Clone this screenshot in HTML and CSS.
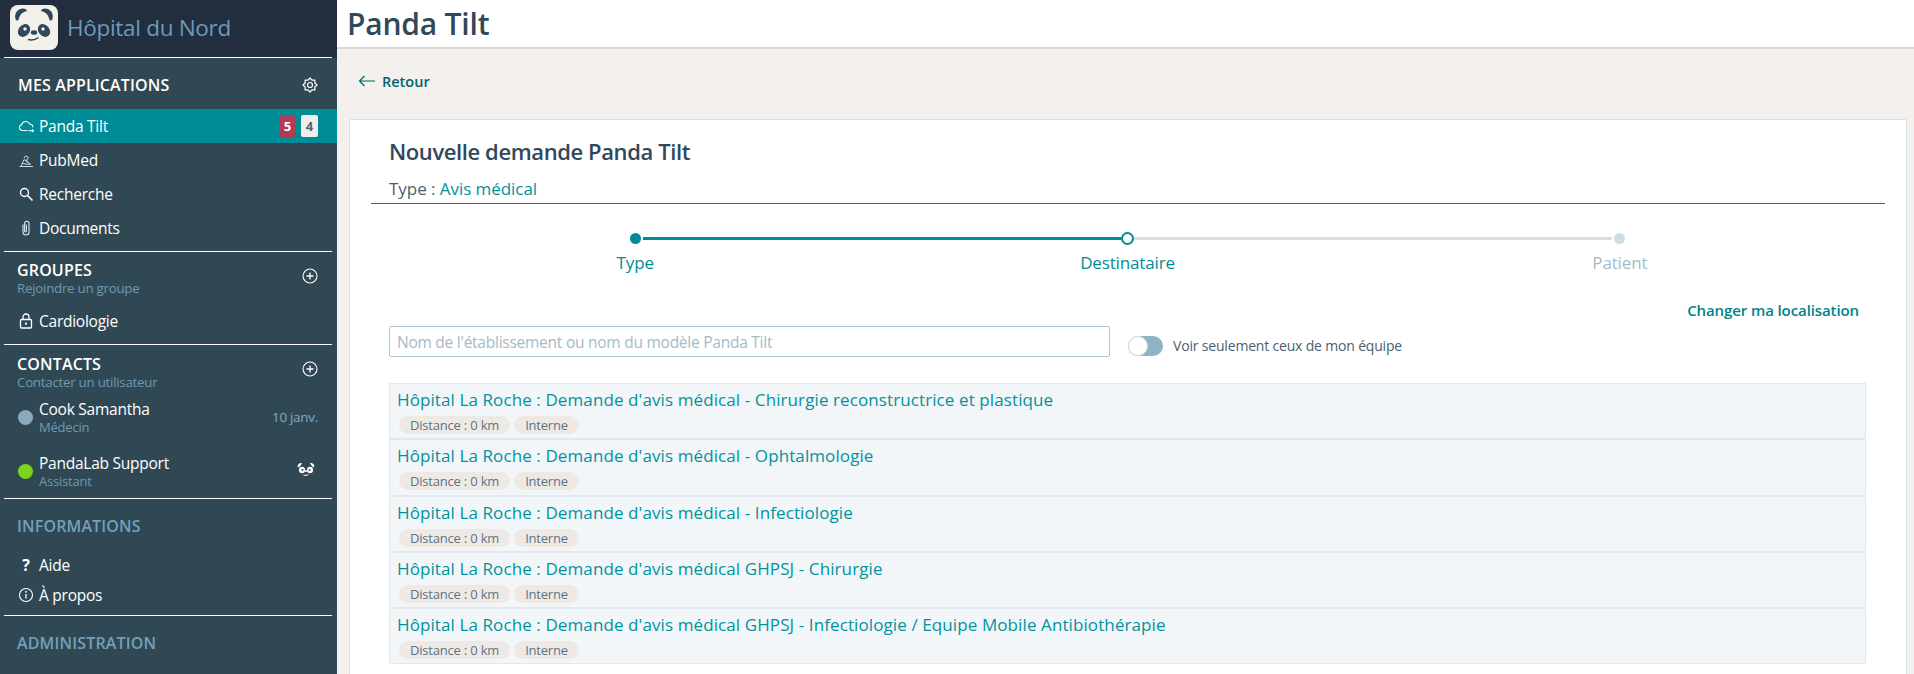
FILE: index.html
```html
<!DOCTYPE html>
<html lang="fr">
<head>
<meta charset="utf-8">
<title>Panda Tilt</title>
<link rel="stylesheet" href="styles.css">
</head>
<body>
<aside class="sidebar">
  <header class="brand">
    <svg class="logo" viewBox="0 0 48 45"><rect width="48" height="45" rx="8" fill="#f2f0eb"/><path d="M5.500 14C4 8 8 3.500 13 3.500 15 3.500 17 4.500 17 6 12 7 9.500 10 8.500 15 7.500 16 6 15.500 5.500 14Z" fill="#30485a"/><path d="M42.500 14C44 8 40 3.500 35 3.500 33 3.500 31 4.500 31 6 36 7 38.500 10 39.500 15 40.500 16 42 15.500 42.500 14Z" fill="#30485a"/><ellipse cx="14" cy="25.500" rx="5.500" ry="7" transform="rotate(40 14 25.500)" fill="#30485a"/><ellipse cx="34" cy="25.500" rx="5.500" ry="7" transform="rotate(-40 34 25.500)" fill="#30485a"/><circle cx="15" cy="24" r="1.700" fill="#f2f0eb"/><circle cx="33" cy="24" r="1.700" fill="#f2f0eb"/><ellipse cx="24" cy="27.500" rx="3.200" ry="2.300" fill="#30485a"/><path d="M18 34.500Q24 36 28.500 32.500" fill="none" stroke="#30485a" stroke-width="1.500"/></svg>
    <span class="brand-name">Hôpital du Nord</span>
  </header>

  <section class="block block-apps">
    <div class="block-head head-apps">
      <h2 class="block-title">MES APPLICATIONS</h2>
      <svg class="ico-r" viewBox="0 0 16 16"><path d="M15 8L12.800 10 12.950 12.950 10 12.800 8 15 6 12.800 3.050 12.950 3.200 10 1 8 3.200 6 3.050 3.050 6 3.200 8 1 10 3.200 12.950 3.050 12.800 6Z" fill="none" stroke="#fff" stroke-width="1.200" stroke-linejoin="round"/><circle cx="8" cy="8" r="2.500" fill="none" stroke="#fff" stroke-width="1.200"/></svg>
    </div>
    <a class="nav-row active">
      <svg class="ico" viewBox="0 0 16 16"><path d="M9.500 12.500H4.200A3 3 0 0 1 3.700 6.600 4.200 4.200 0 0 1 11.600 6 3.300 3.300 0 0 1 14.800 9.300M10.500 12.800H15.500M14 11.500l1.500 1.300-1.500 1.200" fill="none" stroke="#fff" stroke-width="1.100"/></svg>
      <span class="nav-label">Panda Tilt</span>
      <span class="badge badge-red">5</span><span class="badge badge-light">4</span>
    </a>
    <a class="nav-row">
      <svg class="ico" viewBox="0 0 16 16"><path d="M1.500 14.500H15M3 14.500l3-7 7 5M4.500 11.500l7 1M6.500 6a1.800 1.800 0 1 1 2.300 1.600M8 7.500l2.500 3.500" fill="none" stroke="#cfdbe2" stroke-width="1"/></svg>
      <span class="nav-label">PubMed</span>
    </a>
    <a class="nav-row">
      <svg class="ico" viewBox="0 0 16 16"><circle cx="6.500" cy="6.500" r="4" fill="none" stroke="#fff" stroke-width="1.400"/><path d="M9.500 9.500l5 5" stroke="#fff" stroke-width="1.600"/></svg>
      <span class="nav-label">Recherche</span>
    </a>
    <a class="nav-row">
      <svg class="ico" viewBox="0 0 16 16"><path d="M5 4.500v7.500a3 3 0 0 0 6 0V3.500a2.200 2.200 0 0 0-4.400 0V11a.9.900 0 0 0 1.800 0V4.500" fill="none" stroke="#dfe7ec" stroke-width="1.100"/></svg>
      <span class="nav-label">Documents</span>
    </a>
  </section>

  <section class="block block-groups">
    <div class="block-head head-sub">
      <div><h2 class="block-title">GROUPES</h2><p class="block-sub">Rejoindre un groupe</p></div>
      <svg class="ico-r ico-plus" viewBox="0 0 16 16"><circle cx="8" cy="8" r="7" fill="none" stroke="#fff" stroke-width="1.100"/><path d="M8 4.500v7M4.500 8h7" stroke="#fff" stroke-width="1.300"/></svg>
    </div>
    <a class="nav-row">
      <svg class="ico" viewBox="0 0 16 16"><rect x="2.500" y="6.500" width="11" height="8.500" rx="1" fill="none" stroke="#fff" stroke-width="1.300"/><path d="M5 6.500V4a3 3 0 0 1 6 0v2.500" fill="none" stroke="#fff" stroke-width="1.300"/><circle cx="8" cy="10.700" r="1.100" fill="#fff"/></svg>
      <span class="nav-label">Cardiologie</span>
    </a>
  </section>

  <section class="block block-contacts">
    <div class="block-head head-sub head-contacts">
      <div><h2 class="block-title">CONTACTS</h2><p class="block-sub">Contacter un utilisateur</p></div>
      <svg class="ico-r ico-plus" viewBox="0 0 16 16"><circle cx="8" cy="8" r="7" fill="none" stroke="#fff" stroke-width="1.100"/><path d="M8 4.500v7M4.500 8h7" stroke="#fff" stroke-width="1.300"/></svg>
    </div>
    <div class="contact">
      <span class="presence off"></span>
      <div class="contact-text"><span class="contact-name">Cook Samantha</span><span class="contact-role">Médecin</span></div>
      <span class="contact-date">10 janv.</span>
    </div>
    <div class="contact">
      <span class="presence on"></span>
      <div class="contact-text"><span class="contact-name">PandaLab Support</span><span class="contact-role">Assistant</span></div>
      <svg class="mini-panda" viewBox="0 0 18 14"><path d="M1 5.500C0 3 2 .5 5 1 4 3 3 5 1 5.500ZM17 5.500C18 3 16 .5 13 1 14 3 15 5 17 5.500Z" fill="#fff"/><ellipse cx="5" cy="8" rx="3" ry="3.300" fill="#fff"/><ellipse cx="13" cy="8" rx="3" ry="3.300" fill="#fff"/><circle cx="5.500" cy="8" r="1" fill="#304854"/><circle cx="12.500" cy="8" r="1" fill="#304854"/><circle cx="9" cy="9" r="1.100" fill="#fff"/><path d="M6.500 13q2.500 1 5-.3" stroke="#fff" fill="none"/></svg>
    </div>
  </section>

  <section class="block block-info">
    <h2 class="block-title muted head-info">INFORMATIONS</h2>
    <a class="nav-row tight">
      <span class="ico help">?</span>
      <span class="nav-label">Aide</span>
    </a>
    <a class="nav-row tight">
      <svg class="ico" viewBox="0 0 16 16"><circle cx="8" cy="8" r="6.500" fill="none" stroke="#fff" stroke-width="1.100"/><path d="M8 7v4.500" stroke="#fff" stroke-width="1.300"/><circle cx="8" cy="4.800" r=".9" fill="#fff"/></svg>
      <span class="nav-label">À propos</span>
    </a>
  </section>

  <section class="block block-admin">
    <h2 class="block-title muted">ADMINISTRATION</h2>
  </section>
</aside>

<main class="main">
  <header class="topbar"><h1 class="page-title">Panda Tilt</h1></header>
  <div class="backbar">
    <svg class="back-ico" viewBox="0 0 18 12"><path d="M17 6H1.500M6.500 1L1.500 6l5 5" fill="none" stroke="#00656e" stroke-width="1.200"/></svg>
    <a class="back-link">Retour</a>
  </div>
  <article class="card">
    <h2 class="card-title">Nouvelle demande Panda Tilt</h2>
    <p class="card-type">Type : <span class="teal">Avis médical</span></p>
    <div class="stepper">
      <div class="step done">
        <div class="track"><span class="seg blank"></span><span class="dot fill"></span><span class="seg on"></span></div>
        <span class="step-label">Type</span>
      </div>
      <div class="step done">
        <div class="track"><span class="seg on"></span><span class="dot ring"></span><span class="seg"></span></div>
        <span class="step-label">Destinataire</span>
      </div>
      <div class="step">
        <div class="track"><span class="seg"></span><span class="dot grey"></span><span class="seg blank"></span></div>
        <span class="step-label">Patient</span>
      </div>
    </div>
    <div class="loc-row"><a class="loc-link">Changer ma localisation</a></div>
    <div class="filter-row">
      <input class="search" type="text" placeholder="Nom de l'établissement ou nom du modèle Panda Tilt">
      <span class="switch"><span class="knob"></span></span>
      <span class="switch-label">Voir seulement ceux de mon équipe</span>
    </div>
    <ul class="results">
      <li class="result"><a class="result-title">Hôpital La Roche : Demande d'avis médical - Chirurgie reconstructrice et plastique</a><div class="chips"><span class="chip chip-d">Distance : 0 km</span><span class="chip">Interne</span></div></li>
      <li class="result"><a class="result-title">Hôpital La Roche : Demande d'avis médical - Ophtalmologie</a><div class="chips"><span class="chip chip-d">Distance : 0 km</span><span class="chip">Interne</span></div></li>
      <li class="result"><a class="result-title">Hôpital La Roche : Demande d'avis médical - Infectiologie</a><div class="chips"><span class="chip chip-d">Distance : 0 km</span><span class="chip">Interne</span></div></li>
      <li class="result"><a class="result-title">Hôpital La Roche : Demande d'avis médical GHPSJ - Chirurgie</a><div class="chips"><span class="chip chip-d">Distance : 0 km</span><span class="chip">Interne</span></div></li>
      <li class="result"><a class="result-title">Hôpital La Roche : Demande d'avis médical GHPSJ - Infectiologie / Equipe Mobile Antibiothérapie</a><div class="chips"><span class="chip chip-d">Distance : 0 km</span><span class="chip">Interne</span></div></li>
    </ul>
  </article>
</main>
</body>
</html>
```
FILE: styles.css
```css
* { box-sizing: border-box; }
html, body { height: 100%; overflow: hidden; }
body {
  margin: 0;
  display: flex;
  font-family: "Open Sans", "Noto Sans", sans-serif;
  color: #30485a;
  background: #f4f0ed;
}
h1, h2, p, ul { margin: 0; padding: 0; }
li { list-style: none; }

/* sidebar */
.sidebar {
  width: 337px;
  height: 674px;
  flex: none;
  overflow: hidden;
  background: #304854;
  color: #fff;
}
.brand {
  height: 58px;
  display: flex;
  align-items: flex-start;
  padding: 5px 0 0 10px;
  background: #222d3d;
}
.logo { width: 48px; height: 45px; flex: none; }
.brand-name {
  margin-left: 9px;
  font-size: 22.500px;
  line-height: 46px;
  font-weight: 500;
  color: #6a9bbd;
  letter-spacing: -0.3px;
}
.block-apps, .block-groups, .block-contacts, .block-info, .block-admin {
  border-top: 1px solid #fff;
  border-image: linear-gradient(90deg, transparent 5px, #fff 5px, #fff 331px, transparent 331px) 1;
}
.block-apps { margin-top: -1px; height: 194px; }
.block-groups { height: 93px; }
.block-contacts { height: 154px; }
.block-info { height: 117px; }
.block-admin { height: 59px; padding: 17px 17px 0; }
.block-head {
  display: flex;
  justify-content: space-between;
  padding: 0 19px 0 17px;
}
.head-apps { height: 51px; align-items: center; padding: 2px 19px 0 18px; }
.head-sub { height: 52px; align-items: flex-start; padding-top: 8px; }
.head-contacts { height: 45px; padding-top: 9px; }
.ico-plus { margin-top: 8px; }
.head-contacts .ico-plus { margin-top: 7px; }
.block-title {
  font-size: 16px;
  line-height: 20px;
  font-weight: 600;
  letter-spacing: 0.15px;
  color: #fff;
}
.block-title.muted { color: #72a0bb; }
.block-sub {
  font-size: 13.300px;
  line-height: 17px;
  color: #6f99b1;
  letter-spacing: -0.25px;
}
.ico-r { width: 16px; height: 16px; flex: none; }
.nav-row {
  height: 34px;
  display: flex;
  align-items: center;
  padding: 0 19px 0 18px;
  font-size: 15.500px;
}
.nav-row.active { background: #008c96; }
.block-apps .nav-row:first-of-type { margin-top: 0; }
.nav-row.tight { height: 30px; }
.ico {
  width: 16px;
  height: 16px;
  flex: none;
  margin-right: 5px;
}
.help {
  font-size: 16px;
  line-height: 16px;
  font-weight: 700;
  text-align: center;
}
.nav-label { flex: 1; letter-spacing: -0.25px; }
.badge {
  width: 17px;
  height: 22px;
  border-radius: 2px;
  font-size: 13px;
  line-height: 22px;
  font-weight: 700;
  text-align: center;
}
.badge-red { background: #b23a55; color: #fff; margin-right: 5px; }
.badge-light { background: #f1ede9; color: #4a6478; }
.block-title.head-info { padding: 17px 17px 0; height: 51px; }
.contact {
  height: 54px;
  display: flex;
  align-items: center;
  padding: 0 19px 0 18px;
}
.presence {
  width: 15px;
  height: 15px;
  border-radius: 50%;
  flex: none;
  margin-right: 6px;
}
.presence.off { background: #8aa9bb; }
.presence.on { background: #7ed321; }
.contact-text { flex: 1; display: flex; flex-direction: column; }
.contact-name { font-size: 15.500px; line-height: 20px; letter-spacing: -0.25px; }
.contact-role { font-size: 13px; line-height: 17px; color: #6f99b1; letter-spacing: -0.2px; }
.contact-date { font-size: 13.500px; color: #7fa8c0; letter-spacing: -0.3px; }
.mini-panda { width: 18px; height: 14px; margin: 0 3px 4px 0; }

/* main */
.main {
  flex: 1;
  min-width: 0;
  height: 674px;
  overflow: hidden;
}
.topbar {
  height: 49px;
  background: #fff;
  border-bottom: 2px solid #d9d9d9;
  padding-left: 10px;
}
.page-title {
  font-size: 30px;
  line-height: 47px;
  font-weight: 600;
  letter-spacing: -0.2px;
  color: #30485a;
}
.backbar {
  height: 70px;
  display: flex;
  align-items: center;
  padding: 0 0 5px 21px;
}
.back-ico { width: 18px; height: 12px; margin-right: 6px; position: relative; top: -1px; }
.back-link { font-size: 14.500px; font-weight: 600; color: #00656e; letter-spacing: 0; }
.card {
  width: 1558px;
  margin-left: 12px;
  height: 560px;
  background: #fff;
  border: 1px solid #d5dfe4;
  border-radius: 2px;
  padding: 0 21px 0 39px;
}
.card-title {
  font-size: 22px;
  line-height: 30px;
  font-weight: 600;
  margin-top: 16px;
  letter-spacing: -0.4px;
  color: #30485a;
}
.card-type {
  margin: 10px 0 0 -18px;
  padding-left: 18px;
  height: 28px;
  font-size: 17px;
  line-height: 26px;
  letter-spacing: -0.05px;
  border-bottom: 1px solid #00808a;
  color: #4a6070;
}
.teal { color: #00939d; }
.stepper {
  display: flex;
  margin-top: 26px;
  width: 1477px;
}
.step {
  flex: 1;
  display: flex;
  flex-direction: column;
  align-items: center;
  color: #a0bccb;
}
.step.done { color: #008c96; }
.track {
  width: 100%;
  height: 16px;
  display: flex;
  align-items: center;
}
.seg { flex: 1; height: 3px; background: #d3dfe6; }
.seg.on { background: #008c96; }
.seg.blank { background: transparent; }
.dot { flex: none; border-radius: 50%; margin: 0 2px; }
.dot.fill { width: 11px; height: 11px; background: #008c96; }
.dot.ring { width: 13px; height: 13px; border: 2px solid #008c96; background: #fff; margin: 0; }
.dot.grey { width: 11px; height: 11px; background: #cfdde5; }
.step-label {
  font-size: 17px;
  line-height: 22px;
  margin-top: 6px;
  letter-spacing: -0.15px;
}
.loc-row {
  display: flex;
  justify-content: flex-end;
  width: 1470px;
  margin-top: 25px;
  height: 22px;
}
.loc-link {
  font-size: 15px;
  line-height: 22px;
  font-weight: 600;
  color: #00828c;
  letter-spacing: -0.1px;
}
.filter-row {
  display: flex;
  align-items: center;
  height: 31px;
  margin-top: 5px;
}
.search {
  width: 721px;
  height: 31px;
  padding: 0 7px;
  border: 1px solid #a9c4d2;
  border-radius: 2px;
  font: 15.500px "Open Sans", "Noto Sans", sans-serif;
  letter-spacing: -0.25px;
  background: #fff;
}
.search::placeholder { color: #a4bac7; opacity: 1; }
.switch {
  width: 35px;
  height: 20px;
  margin: 8px 0 0 18px;
  border-radius: 10px;
  background: #92b3c4;
  flex: none;
  display: block;
}
.knob {
  display: block;
  width: 20px;
  height: 20px;
  border-radius: 50%;
  background: #fff;
  border: 1px solid #cfdde5;
}
.switch-label {
  margin: 8px 0 0 10px;
  font-size: 14px;
  color: #4a6070;
  letter-spacing: -0.18px;
}
.results { margin-top: 26px; width: 1477px; }
.result {
  height: 56.250px;
  padding: 3px 7px 0;
  background: #f2f6f9;
  border: 1px solid #e1e8ed;
}
.result-title {
  display: block;
  font-size: 17px;
  line-height: 26px;
  color: #00939d;
  letter-spacing: 0.1px;
}
.chips { display: flex; gap: 4px; padding-left: 2px; margin-top: 3px; }
.chip {
  height: 18px;
  padding: 0 11px;
  border-radius: 9px;
  background: #efe9e4;
  font-size: 13px;
  line-height: 18px;
  color: #5d7385;
  letter-spacing: -0.2px;
}
```
